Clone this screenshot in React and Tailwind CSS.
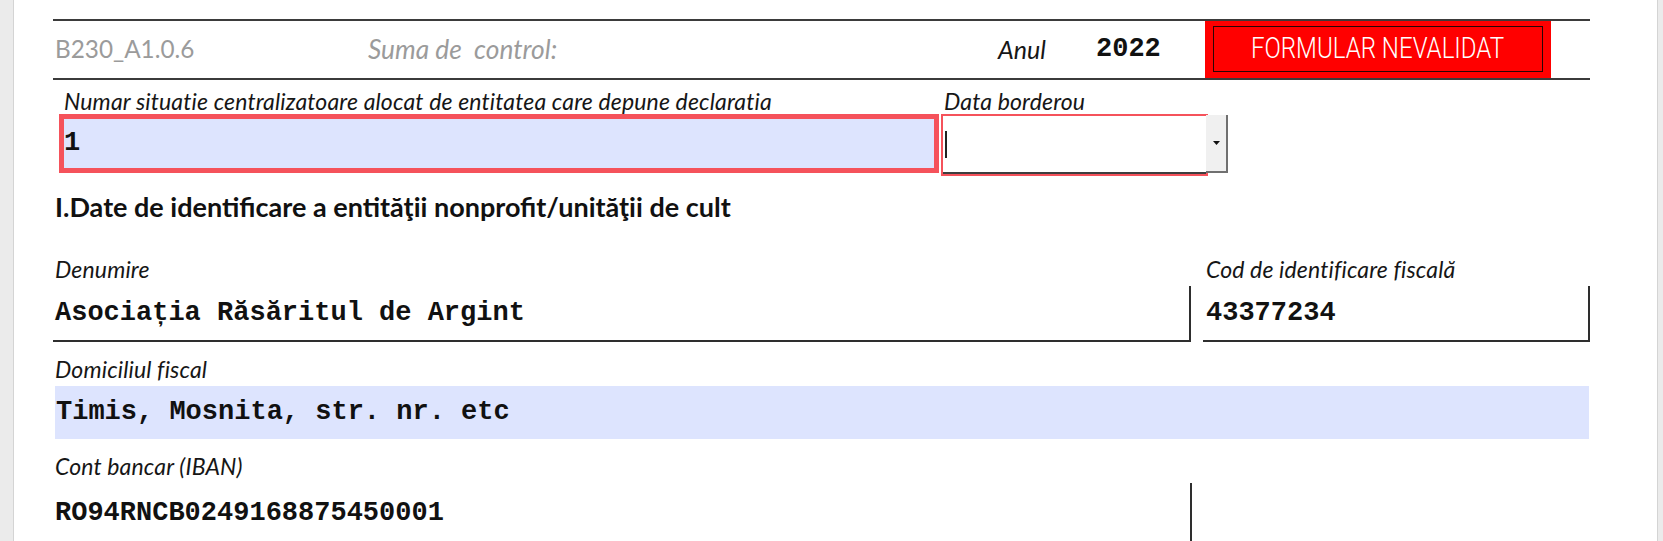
const sans = "font-['Lato','Open_Sans',sans-serif]"
const mono = "font-['Liberation_Mono','Courier_New',monospace] font-bold"

function Label({ children, className = '' }) {
  return (
    <div className={`${sans} italic text-[23px] leading-[26px] text-[#161616] tracking-[0.15px] ${className}`}>
      {children}
    </div>
  )
}

function Value({ children, className = '' }) {
  return (
    <span className={`${mono} text-[27px] leading-none text-[#111] ${className}`}>{children}</span>
  )
}

export default function App() {
  return (
    <div className="flex h-[541px] w-[1663px] overflow-hidden bg-[#ebebeb]">
      <div className="ml-[13px] w-[1645px] shrink-0 border-x border-[#d4d4d4] bg-white pl-[39px] pt-[19px]">
        <div className="w-[1537px]">
          {/* header row */}
          <div className="flex h-[61px] items-stretch border-y-2 border-[#3b3b3b]">
            <div className={`${sans} flex w-[315px] items-center pl-[2px] text-[24.3px] text-[#9b9b9b]`}>
              B230_A1.0.6
            </div>
            <div className={`${sans} flex w-[630px] items-center whitespace-pre text-[26.3px] italic text-[#9b9b9b]`}>
              {'Suma de  control:'}
            </div>
            <div className={`${sans} flex w-[98px] items-center text-[25px] italic text-[#161616]`}>
              Anul
            </div>
            <div className="flex w-[109px] items-center">
              <Value className="text-[26px]">2022</Value>
            </div>
            <div className="flex w-[346px] bg-[#ff0000] px-[8px] pb-[6px] pt-[5px]">
              <div className="flex flex-1 items-center justify-center border-[1.5px] border-[#2a0505]">
                <span className="inline-block scale-x-[0.83] font-['Roboto',sans-serif] text-[29px] font-light text-white">
                  FORMULAR NEVALIDAT
                </span>
              </div>
            </div>
          </div>

          {/* numar + data */}
          <div className="flex pt-[8px]">
            <div className="ml-[6px] w-[880px]">
              <Label className="pl-[5px]">
                Numar situatie centralizatoare alocat de entitatea care depune declaratia
              </Label>
              <div className="flex h-[59px] items-center border-[5px] border-[#f5525b] bg-[#dde4fe]">
                <Value>1</Value>
              </div>
            </div>
            <div className="ml-[2px]">
              <Label className="pl-[3px] leading-[20px]">Data borderou</Label>
              <div className="flex">
                <div className="flex h-[62px] w-[267px] items-center border-[2px] border-[#f5525b] bg-white">
                  <div className="flex h-full w-full items-center border-b-2 border-[#3e3e3e] pl-[2px]">
                    <div className="h-[27px] w-[2px] bg-[#222]" />
                  </div>
                </div>
                <div className="-ml-[2px] mt-[1px] flex h-[58px] w-[22px] items-center justify-center border-b-2 border-r-2 border-[#707070] bg-[#f0f0f0]">
                  <svg width="7" height="4" viewBox="0 0 7 4">
                    <path d="M0 0h7L3.5 4z" fill="#111" />
                  </svg>
                </div>
              </div>
            </div>
          </div>

          {/* section heading */}
          <div className={`${sans} mt-[15px] pl-[2px] text-[27px] font-bold leading-[32px] text-[#111]`}>
            I.Date de identificare a entităţii nonprofit/unităţii de cult
          </div>

          {/* denumire + cif */}
          <div className="mt-[33px] grid grid-cols-[1138px_387px] gap-x-[12px]">
            <Label className="pl-[2px]">Denumire</Label>
            <Label className="pl-[3px]">Cod de identificare fiscală</Label>
            <div className="mt-[4px] flex h-[56px] items-center border-b-2 border-r-2 border-[#2e2e2e] pl-[2px]">
              <Value>Asociația Răsăritul de Argint</Value>
            </div>
            <div className="mt-[4px] flex h-[56px] items-center border-b-2 border-r-2 border-[#2e2e2e] pl-[3px]">
              <Value>43377234</Value>
            </div>
          </div>

          {/* domiciliu */}
          <Label className="mt-[14px] pl-[2px]">Domiciliul fiscal</Label>
          <div className="ml-[2px] mt-[4px] flex h-[53px] w-[1534px] items-center bg-[#dde4fe] pl-[1px]">
            <Value>Timis, Mosnita, str. nr. etc</Value>
          </div>

          {/* iban */}
          <Label className="mt-[14px] pl-[2px]">Cont bancar (IBAN)</Label>
          <div className="mt-[4px] flex h-[60px] w-[1139px] items-center border-r-2 border-[#2e2e2e] pl-[2px]">
            <Value>RO94RNCB0249168875450001</Value>
          </div>
        </div>
      </div>
    </div>
  )
}
